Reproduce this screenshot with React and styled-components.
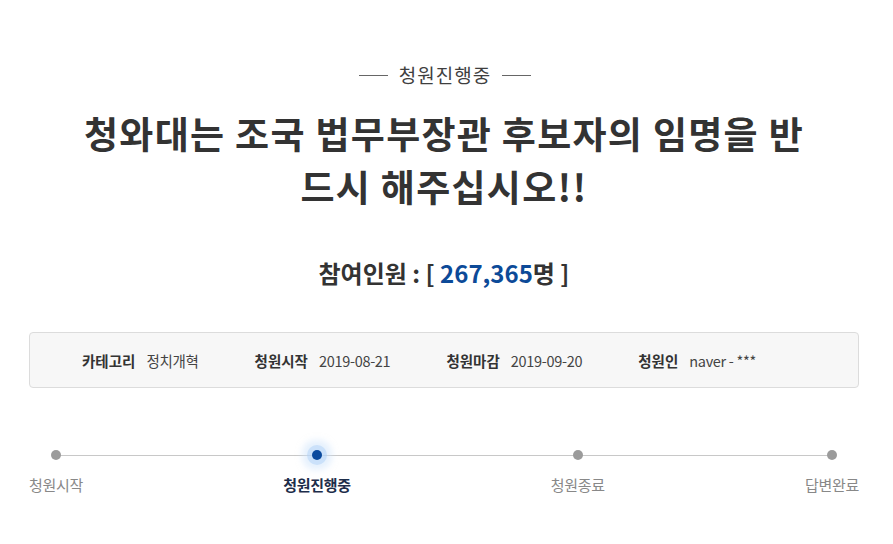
import styled, { createGlobalStyle } from 'styled-components';

const GlobalStyle = createGlobalStyle`
  html, body {
    margin: 0;
    padding: 0;
    background: #fff;
  }
  body {
    font-family: "Noto Sans CJK KR", "Noto Sans", sans-serif;
    color: #333;
  }
`;

const Page = styled.div`
  width: 830px;
  margin-left: 29px;
  padding-top: 60px;
`;

const Status = styled.div`
  display: flex;
  align-items: center;
  justify-content: center;
  gap: 11px;
  font-size: 19px;
  line-height: 30px;
  letter-spacing: 1px;
  color: #3f3f3f;
  margin-left: 2px;
  &::before,
  &::after {
    content: '';
    width: 29px;
    height: 1px;
    background: #666;
  }
`;

const Title = styled.h1`
  margin: 17px auto 0;
  max-width: 745px;
  text-align: center;
  font-size: 37px;
  line-height: 53px;
  font-weight: 700;
  color: #333;
  letter-spacing: 1.3px;
`;

const Count = styled.div`
  margin-top: 43px;
  text-align: center;
  font-size: 24px;
  line-height: 34px;
  font-weight: 700;
  color: #333;
  span {
    color: #0c4a98;
  }
`;

const InfoBox = styled.div`
  margin-top: 42px;
  height: 54px;
  display: flex;
  align-items: center;
  gap: 56px;
  padding-left: 52px;
  background: #f7f7f7;
  border: 1px solid #dcdcdc;
  border-radius: 4px;
`;

const InfoItem = styled.div`
  display: flex;
  align-items: center;
  gap: 11px;
  font-size: 14.5px;
  color: #444;
  letter-spacing: -0.3px;
  b {
    font-weight: 700;
    color: #333;
    letter-spacing: 0;
  }
`;

const Steps = styled.div`
  position: relative;
  margin-top: 60px;
  display: flex;
  justify-content: space-between;
  &::before {
    content: '';
    position: absolute;
    left: 27px;
    right: 27px;
    top: 7px;
    height: 1px;
    background: #c8c8c8;
  }
`;

const Step = styled.div`
  position: relative;
  display: flex;
  flex-direction: column;
  align-items: center;
  gap: 15px;
  font-size: 15px;
  line-height: 20px;
  color: ${(p) => (p.$active ? '#1d2d4a' : '#888')};
  font-weight: ${(p) => (p.$active ? 700 : 400)};
  letter-spacing: -0.3px;
`;

const Dot = styled.span`
  width: 10px;
  height: 10px;
  margin-top: 2px;
  border-radius: 50%;
  background: ${(p) => (p.$active ? '#0b4a9e' : '#9b9b9b')};
  box-shadow: ${(p) =>
    p.$active ? '0 0 0 5px rgba(175, 210, 248, 0.5), 0 0 6px 10px rgba(205, 228, 252, 0.5)' : 'none'};
`;

const info = [
  ['카테고리', '정치개혁'],
  ['청원시작', '2019-08-21'],
  ['청원마감', '2019-09-20'],
  ['청원인', 'naver - ***'],
];

const steps = ['청원시작', '청원진행중', '청원종료', '답변완료'];

export default function App() {
  return (
    <>
      <GlobalStyle />
      <Page>
        <Status>청원진행중</Status>
        <Title>청와대는 조국 법무부장관 후보자의 임명을 반드시 해주십시오!!</Title>
        <Count>
          참여인원 : [ <span>267,365</span>명 ]
        </Count>
        <InfoBox>
          {info.map(([k, v]) => (
            <InfoItem key={k}>
              <b>{k}</b>
              {v}
            </InfoItem>
          ))}
        </InfoBox>
        <Steps>
          {steps.map((s, i) => (
            <Step key={s} $active={i === 1}>
              <Dot $active={i === 1} />
              {s}
            </Step>
          ))}
        </Steps>
      </Page>
    </>
  );
}
